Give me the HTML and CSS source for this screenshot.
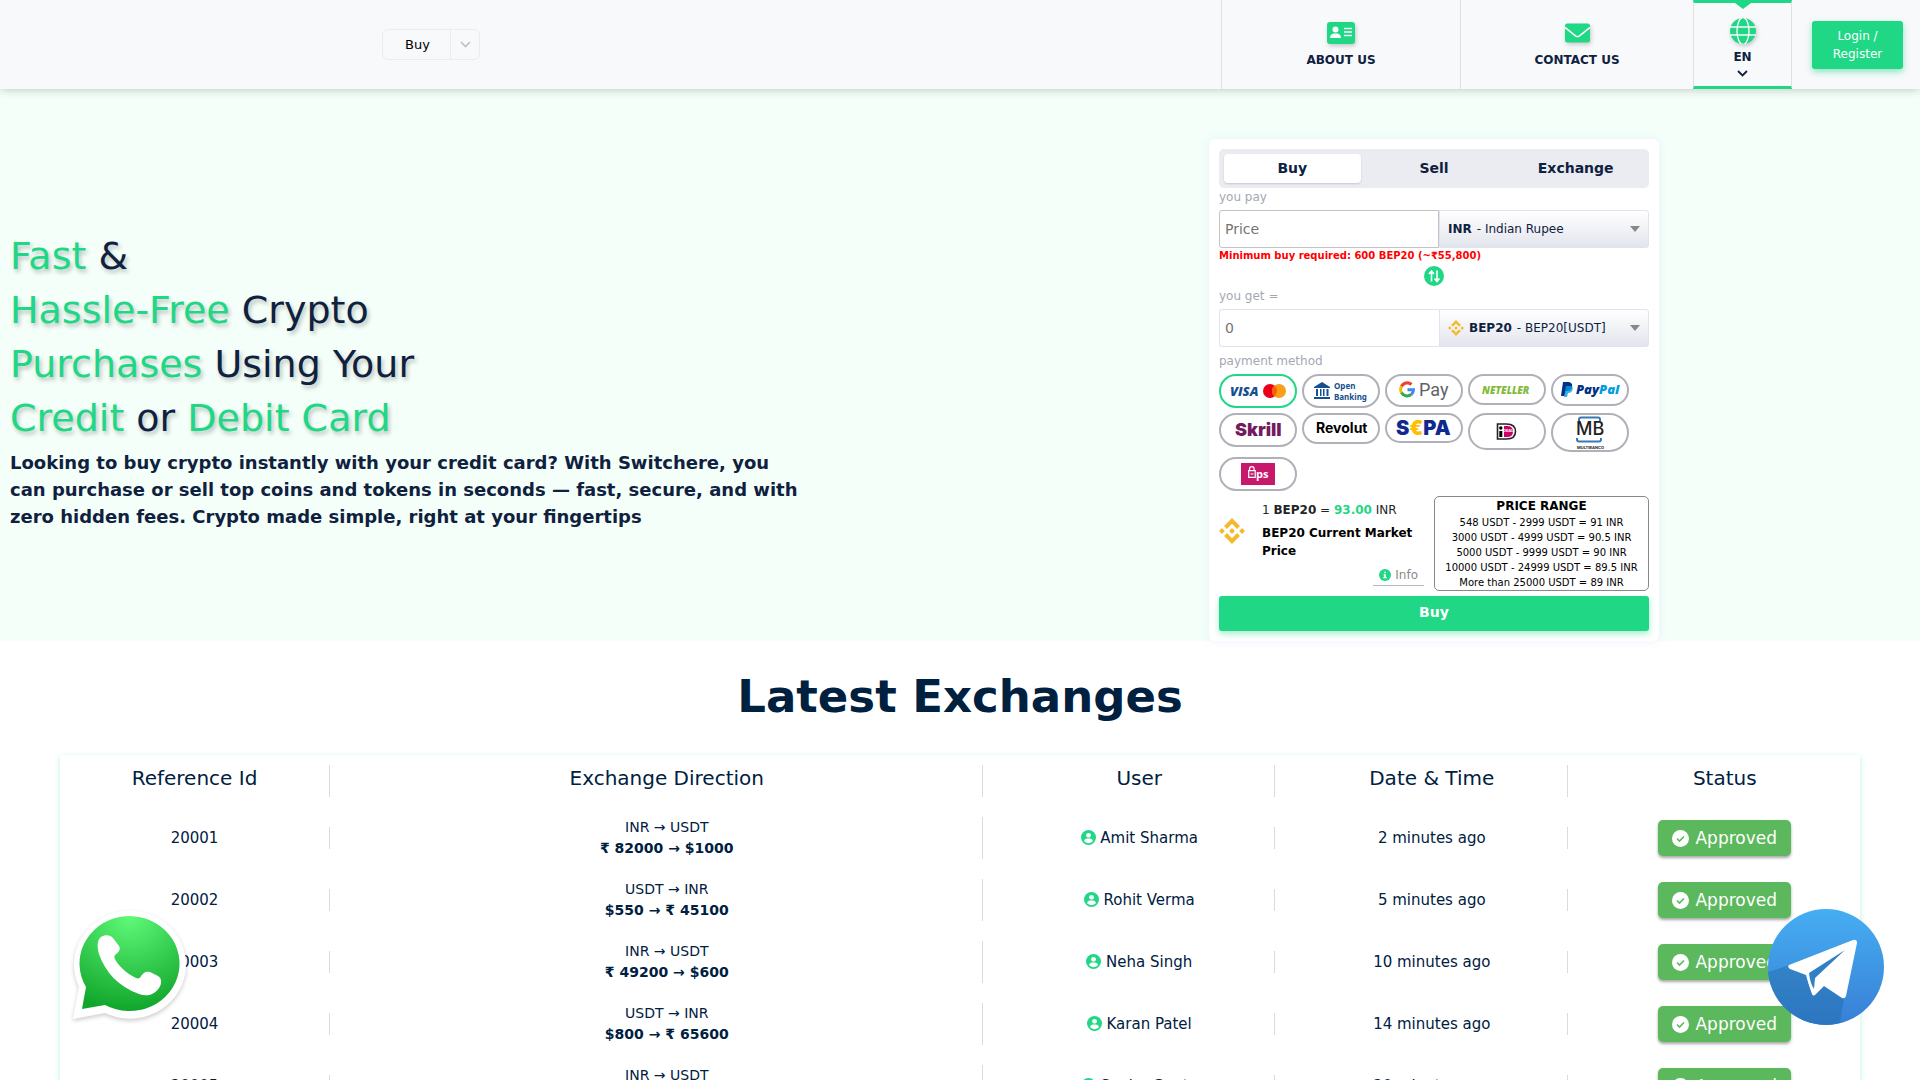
FILE: index.html
```html
<!DOCTYPE html>
<html lang="en">

<head>
    <meta charset="UTF-8">
    <meta name="viewport" content="width=device-width, initial-scale=1.0">
    <title>Buy crypto instantly</title>
    <link rel="stylesheet" href="styles.css">
</head>

<body>
    <!-- shared icons -->
    <svg class="sprite" aria-hidden="true">
        <symbol id="bnb" viewBox="0 0 32 32">
            <path fill="#f3ba2f" d="M9.8 13.4 16 7.2l6.2 6.2 3.6-3.6L16 0 6.2 9.8zM0 16l3.6-3.6L7.2 16l-3.6 3.6zM9.8 18.6 16 24.8l6.2-6.2 3.6 3.6L16 32l-9.8-9.8zM24.8 16l3.6-3.6L32 16l-3.6 3.6zM12.4 16 16 12.4l3.6 3.6-3.6 3.6z" />
        </symbol>
        <symbol id="user" viewBox="0 0 16 16">
            <circle cx="8" cy="8" r="8" fill="#1fd785" />
            <circle cx="8" cy="5.7" r="2.6" fill="#fff" />
            <path fill="#fff" d="M3.4 12c0-2 1.3-3 3-3h3.2c1.7 0 3 1 3 3-1 1.2-2.8 2-4.600 2s-3.600-.8-4.600-2z" />
        </symbol>
        <symbol id="check" viewBox="0 0 17 17">
            <circle cx="8.500" cy="8.500" r="8.500" fill="#fff" />
            <path d="M5 8.500l2.500 2.500 4.500-4.500" fill="none" stroke="#5cb85c" stroke-width="1.600" />
        </symbol>
    </svg>

    <header class="header">
        <div class="switcher">
            <button class="switcher-main">Buy</button>
            <button class="switcher-arrow" aria-label="Open menu">
                <svg width="11" height="7" viewBox="0 0 11 7"><path d="M1 1l4.500 4.500L10 1" fill="none" stroke="#bfbfbf" stroke-width="1.600" /></svg>
            </button>
        </div>

        <nav class="nav">
            <a href="#about" class="nav-item nav-about">
                <svg class="nav-icon" width="28" height="24" viewBox="0 0 28 24">
                    <rect y="1" width="28" height="22" rx="3" fill="#1fd785" />
                    <circle cx="8.500" cy="8.500" r="3" fill="#f8f9fb" />
                    <path fill="#f8f9fb" d="M3 17c0-3 2-4.500 4-4.500h3c2 0 4 1.500 4 4.500z" />
                    <path stroke="#f8f9fb" stroke-width="1.600" d="M17 7.500h8M17 11h8M17 14.500h8" />
                </svg>
                <span>ABOUT US</span>
            </a>
            <a href="#contact" class="nav-item nav-contact">
                <svg class="nav-icon" width="25" height="24" viewBox="0 0 25 24">
                    <rect y="2.500" width="25" height="19" rx="2.500" fill="#1fd785" />
                    <path d="M0 6.500l10.500 8.300q2 1.500 4 0L25 6.500" fill="none" stroke="#f8f9fb" stroke-width="1.600" />
                </svg>
                <span>CONTACT US</span>
            </a>
            <button class="nav-item nav-lang">
                <svg class="nav-icon" width="26" height="26" viewBox="0 0 26 26">
                    <circle cx="13" cy="13" r="13" fill="#1fd785" />
                    <ellipse cx="13" cy="13" rx="6" ry="13.500" fill="none" stroke="#f8f9fb" stroke-width="1.400" />
                    <path d="M0 9h26M0 17h26" stroke="#f8f9fb" stroke-width="1.400" />
                </svg>
                <span>EN</span>
                <svg width="11" height="7" viewBox="0 0 11 7"><path d="M1 1l4.500 4.500L10 1" fill="none" stroke="#0f213f" stroke-width="1.800" /></svg>
            </button>
        </nav>

        <a href="#login" class="login">Login / Register</a>
    </header>

    <section class="hero">
        <div class="hero-text">
            <h1>
                <span>Fast</span> &amp;<br>
                <span>Hassle-Free</span> Crypto<br>
                <span>Purchases</span> Using Your<br>
                <span>Credit</span> or <span>Debit Card</span>
            </h1>
            <p>Looking to buy crypto instantly with your credit card? With Switchere, you can purchase or sell top coins and tokens in seconds — fast, secure, and with zero hidden fees. Crypto made simple, right at your fingertips</p>
        </div>

        <form class="card">
            <div class="tabs">
                <button type="button" class="tab active">Buy</button>
                <button type="button" class="tab">Sell</button>
                <button type="button" class="tab">Exchange</button>
            </div>

            <label class="label" for="pay">you pay</label>
            <div class="field field-pay">
                <input id="pay" type="text" placeholder="Price">
                <button type="button" class="currency">
                    <b>INR</b><span>- Indian Rupee</span><i class="caret"></i>
                </button>
            </div>
            <p class="error">Minimum buy required: 600 BEP20 (~₹55,800)</p>

            <button type="button" class="swap" aria-label="Swap currencies">
                <svg width="20" height="20" viewBox="0 0 20 20">
                    <circle cx="10" cy="10" r="10" fill="#1fd785" />
                    <path d="M7.500 15.500v-10M5 8l2.500-3L10 8M13 4.500v10M10.500 12.500l2.500 3 2.500-3" fill="none" stroke="#fff" stroke-width="1.600" />
                </svg>
            </button>

            <label class="label" for="get">you get =</label>
            <div class="field">
                <input id="get" type="text" placeholder="0">
                <button type="button" class="currency">
                    <svg class="coin" width="16" height="16"><use href="#bnb" /></svg>
                    <b>BEP20</b><span>- BEP20[USDT]</span><i class="caret"></i>
                </button>
            </div>

            <p class="label label-methods">payment method</p>
            <div class="methods">
                <button type="button" class="method active" aria-label="Visa and Mastercard">
                    <svg width="60" height="30" viewBox="0 0 60 30">
                        <text x="2" y="20" class="logo-visa">VISA</text>
                        <circle cx="42" cy="15" r="7" fill="#eb001b" />
                        <circle cx="51" cy="15" r="7" fill="#f79e1b" />
                        <path d="M46.500 9.600a7 7 0 0 1 0 10.800 7 7 0 0 1 0-10.800z" fill="#ff5f00" />
                    </svg>
                </button>
                <button type="button" class="method" aria-label="Open Banking">
                    <svg width="60" height="30" viewBox="0 0 60 30">
                        <g fill="#14508f">
                            <path d="M3 11l8-5 8 5v1H3zM3 21h16v2H3zM5 13h2v7H5zM9 13h1.500v7H9zM12 13h1.500v7H12zM15.500 13h2v7h-2z" />
                            <text x="23" y="13" class="logo-open">Open</text>
                            <text x="23" y="24" class="logo-open">Banking</text>
                        </g>
                    </svg>
                </button>
                <button type="button" class="method" aria-label="Google Pay">
                    <svg width="60" height="29" viewBox="0 0 60 29">
                        <g fill="none" stroke-width="3" transform="translate(5 0)">
                            <path d="M12.500 8.500A6.500 6.500 0 0 0 2.400 10.500" stroke="#ea4335" />
                            <path d="M2.400 10.500a6.500 6.500 0 0 0 0 6" stroke="#fbbc04" />
                            <path d="M2.400 16.500a6.500 6.500 0 0 0 9.800 2" stroke="#34a853" />
                            <path d="M12.200 18.500a6.500 6.500 0 0 0 2.300-4.700H8.500" stroke="#4285f4" />
                        </g>
                        <text x="25" y="20" class="logo-gpay">Pay</text>
                    </svg>
                </button>
                <button type="button" class="method" aria-label="Neteller">
                    <svg width="60" height="27" viewBox="0 0 60 27">
                        <text x="5" y="18" class="logo-neteller">NETELLER</text>
                    </svg>
                </button>
                <button type="button" class="method" aria-label="PayPal">
                    <svg width="60" height="28" viewBox="0 0 60 28">
                        <path d="M3 6h6q4 1 3 5-1 4-5 4H5.500l-1 5H1z" fill="#003087" />
                        <path d="M6 10h5q3 1 1 5-1 2-4 2l-1 4H4z" fill="#009cde" opacity=".8" />
                        <text x="16" y="18" class="logo-paypal">Pay<tspan fill="#009cde">Pal</tspan></text>
                    </svg>
                </button>
                <button type="button" class="method" aria-label="Skrill">
                    <svg width="60" height="30" viewBox="0 0 60 30"><text x="7" y="21" class="logo-skrill">Skrill</text></svg>
                </button>
                <button type="button" class="method" aria-label="Revolut">
                    <svg width="60" height="27" viewBox="0 0 60 27"><text x="5" y="18" class="logo-revolut">Revolut</text></svg>
                </button>
                <button type="button" class="method" aria-label="SEPA">
                    <svg width="60" height="26" viewBox="0 0 60 26"><text x="2" y="20" class="logo-sepa">S<tspan fill="#ffbe00">€</tspan>PA</text></svg>
                </button>
                <button type="button" class="method" aria-label="iDEAL">
                    <svg width="60" height="33" viewBox="0 0 60 33">
                        <path d="M20.500 9h9q9 0 9 7.500t-9 7.500h-9z" fill="#fff" stroke="#222" stroke-width="1.600" />
                        <path d="M27 11h3q6 0 6 5.500t-6 5.500h-3z" fill="#cc0066" />
                        <circle cx="23.800" cy="13" r="1.700" />
                        <path d="M22.300 16h3v6h-3z" />
                        <text x="26" y="17" class="logo-ideal">DEAL</text>
                    </svg>
                </button>
                <button type="button" class="method" aria-label="Multibanco">
                    <svg width="60" height="35" viewBox="0 0 60 35">
                        <path d="M19 6V4.500q0-2 2-2h17q2 0 2 2V6M17 23v1.500q0 2 2 2h20q2 0 2-2V23" fill="none" stroke="#3b78b8" stroke-width="2" />
                        <text x="16" y="20" class="logo-mb">MB</text>
                        <text x="17" y="34" class="logo-multi">MULTIBANCO</text>
                    </svg>
                </button>
                <button type="button" class="method" aria-label="EPS">
                    <svg width="60" height="30" viewBox="0 0 60 30">
                        <path d="M13 4h34v22H13z" fill="#c8186c" />
                        <path d="M21.500 11.500V10a2.300 2.300 0 0 1 4.600 0v1.500M20.700 11.700h6.500v6.600h-6.500zM22.500 15h3" fill="none" stroke="#fff" stroke-width="1.200" />
                        <text x="28" y="19" class="logo-eps">ps</text>
                    </svg>
                </button>
            </div>

            <div class="summary">
                <svg class="coin" width="26" height="26"><use href="#bnb" /></svg>
                <div class="rate">
                    <p>1 <b>BEP20</b> = <b class="green">93.00</b> INR</p>
                    <h4>BEP20 Current Market Price</h4>
                    <button type="button" class="info">
                        <svg width="12" height="12" viewBox="0 0 12 12">
                            <circle cx="6" cy="6" r="6" fill="#1fd785" />
                            <path d="M5.200 2.800h1.600v1.500H5.200zM4.500 5.200h2.300v2.900h.9v1.100H4.300V8.100h.9V6.300h-.7z" fill="#fff" />
                        </svg>
                        Info
                    </button>
                </div>
                <div class="range">
                    <h5>PRICE RANGE</h5>
                    <p>548 USDT - 2999 USDT = 91 INR</p>
                    <p>3000 USDT - 4999 USDT = 90.5 INR</p>
                    <p>5000 USDT - 9999 USDT = 90 INR</p>
                    <p>10000 USDT - 24999 USDT = 89.5 INR</p>
                    <p>More than 25000 USDT = 89 INR</p>
                </div>
            </div>

            <button type="submit" class="submit">Buy</button>
        </form>
    </section>

    <section class="latest">
        <h2>Latest Exchanges</h2>
        <table>
            <thead>
                <tr>
                    <th class="col-id"><div>Reference Id</div></th>
                    <th><div>Exchange Direction</div></th>
                    <th class="col-small"><div>User</div></th>
                    <th class="col-small"><div>Date &amp; Time</div></th>
                    <th class="col-small"><div>Status</div></th>
                </tr>
            </thead>
            <tbody>
                <tr>
                    <td><div>20001</div></td>
                    <td><div class="direction">INR → USDT<br><b>₹ 82000 → $1000</b></div></td>
                    <td><div><svg class="user" width="15" height="15"><use href="#user" /></svg> Amit Sharma</div></td>
                    <td><div>2 minutes ago</div></td>
                    <td><div><span class="approved"><svg width="17" height="17"><use href="#check" /></svg>Approved</span></div></td>
                </tr>
                <tr>
                    <td><div>20002</div></td>
                    <td><div class="direction">USDT → INR<br><b>$550 → ₹ 45100</b></div></td>
                    <td><div><svg class="user" width="15" height="15"><use href="#user" /></svg> Rohit Verma</div></td>
                    <td><div>5 minutes ago</div></td>
                    <td><div><span class="approved"><svg width="17" height="17"><use href="#check" /></svg>Approved</span></div></td>
                </tr>
                <tr>
                    <td><div>20003</div></td>
                    <td><div class="direction">INR → USDT<br><b>₹ 49200 → $600</b></div></td>
                    <td><div><svg class="user" width="15" height="15"><use href="#user" /></svg> Neha Singh</div></td>
                    <td><div>10 minutes ago</div></td>
                    <td><div><span class="approved"><svg width="17" height="17"><use href="#check" /></svg>Approved</span></div></td>
                </tr>
                <tr>
                    <td><div>20004</div></td>
                    <td><div class="direction">USDT → INR<br><b>$800 → ₹ 65600</b></div></td>
                    <td><div><svg class="user" width="15" height="15"><use href="#user" /></svg> Karan Patel</div></td>
                    <td><div>14 minutes ago</div></td>
                    <td><div><span class="approved"><svg width="17" height="17"><use href="#check" /></svg>Approved</span></div></td>
                </tr>
                <tr>
                    <td><div>20005</div></td>
                    <td><div class="direction">INR → USDT<br><b>₹ 98400 → $1200</b></div></td>
                    <td><div><svg class="user" width="15" height="15"><use href="#user" /></svg> Sneha Gupta</div></td>
                    <td><div>20 minutes ago</div></td>
                    <td><div><span class="approved"><svg width="17" height="17"><use href="#check" /></svg>Approved</span></div></td>
                </tr>
            </tbody>
        </table>
    </section>

    <a href="#whatsapp" class="chat chat-left" aria-label="WhatsApp">
        <svg width="120" height="120" viewBox="0 0 120 120">
            <defs>
                <radialGradient id="wa" cx=".5" cy="0" r="1">
                    <stop offset="0" stop-color="#60fa7a" />
                    <stop offset="1" stop-color="#10a62b" />
                </radialGradient>
            </defs>
            <path class="wa-back" fill="#fff" d="M4 113l6-32A56 54 0 1 1 36 107z" />
            <path fill="url(#wa)" d="M13 103l4-22A50 47.500 0 1 1 36 99z" />
            <path fill="#fff" d="M32 31c4-3 10-2 12 1l6 8c2 3 0 6-4 9-1 2-1 3 1 6 6 9 14 14 20 17 3 1 4 0 5-2 3-4 5-5 9-4l8 4c4 2 4 8 1 12-5 7-12 9-20 6C50 81 36 66 30 48c-2-7-2-14 2-17z" />
        </svg>
    </a>
    <a href="#telegram" class="chat chat-right" aria-label="Telegram">
        <svg width="116" height="116" viewBox="0 0 116 116">
            <defs>
                <linearGradient id="tg" x1="0" y1="0" x2="0" y2="1">
                    <stop offset="0" stop-color="#46aef2" />
                    <stop offset="1" stop-color="#387fd6" />
                </linearGradient>
                <linearGradient id="tg-shade" x1="0" y1="0" x2="0" y2="1">
                    <stop offset="0" stop-color="#3585c9" />
                    <stop offset="1" stop-color="#2c76c0" />
                </linearGradient>
            </defs>
            <circle cx="58" cy="58" r="58" fill="url(#tg)" />
            <path fill="url(#tg-shade)" d="M0 63l22-7 60-15-6 48-4 25A58 58 0 0 1 0 63z" />
            <path fill="#fff" d="M21 56q-2 2 1 4l16 6q2 8 6 19 1 3 4 0l8-8 18 12q3 1 4-2L89 34q0-4-4-3z" />
            <path fill="#3080c6" d="M41 64l36-23-30 28-1 11q-4-6-5-16z" />
        </svg>
    </a>
</body>

</html>
```
FILE: styles.css
```css
* {
    box-sizing: border-box;
}

body {
    font-family: "DejaVu Sans", sans-serif;
    margin: 0;
    color: #0f213f;
    background: #fff;
}

h1, h2, h4, h5, p {
    margin: 0;
}

button, input {
    font-family: inherit;
    color: inherit;
}

button {
    border: 0;
    padding: 0;
    background: none;
    cursor: pointer;
}

svg {
    flex-shrink: 0;
}

.sprite {
    display: none;
}

.header {
    display: flex;
    align-items: center;
    height: 89px;
    padding: 0 17px 0 382px;
    background: #f8f9fb;
    box-shadow: 0 0 10px rgba(0, 0, 0, 0.25);
    position: relative;
    z-index: 1;
}

.switcher {
    display: flex;
    height: 31px;
    border: 1px solid #ececee;
    border-radius: 6px;
    color: #000;
}

.switcher-main {
    width: 68px;
    padding-left: 2px;
    font-size: 13px;
    border-right: 1px solid #ececee;
}

.switcher-arrow {
    width: 28px;
    display: flex;
    align-items: center;
    justify-content: center;
}

.nav {
    display: flex;
    align-self: stretch;
    margin-left: auto;
    margin-right: 20px;
}

.nav-item {
    display: flex;
    flex-direction: column;
    align-items: center;
    justify-content: center;
    gap: 7px;
    border-left: 1px solid #dfe0e0;
    color: #0f213f;
    font-size: 12px;
    font-weight: bold;
    line-height: 16px;
    text-decoration: none;
}

.nav-icon {
    filter: drop-shadow(1px 2px 2px rgba(0, 0, 0, 0.2));
}

.nav-about {
    width: 239px;
}

.nav-contact {
    width: 233px;
}

.nav-lang {
    position: relative;
    width: 99px;
    gap: 5px;
    padding-top: 6px;
    border-right: 1px solid #dfe0e0;
    border-top: 3px solid #1fd785;
    border-bottom: 3px solid #1fd785;
}

.nav-lang::before {
    content: "";
    position: absolute;
    top: 0;
    border: 8px solid transparent;
    border-top: 6px solid #1fd785;
    border-bottom: 0;
}

.login {
    width: 91px;
    padding: 6px 16px;
    border-radius: 3px;
    background: #1fd785;
    box-shadow: 0 3px 6px rgba(31, 215, 133, 0.5);
    color: #fff;
    font-size: 12px;
    line-height: 18px;
    text-align: center;
    text-decoration: none;
}

.hero {
    display: flex;
    justify-content: space-between;
    padding-top: 50px;
    background: #f4fff9;
}

.hero-text {
    width: 820px;
    padding: 90px 10px 0;
}

.hero-text h1 {
    margin-bottom: 4px;
    font-size: 38px;
    font-weight: normal;
    line-height: 54px;
    text-shadow: 2px 3px 4px rgba(0, 0, 0, 0.25);
}

.hero-text h1 span,
.green {
    color: #1fd785;
}

.hero-text p {
    font-size: 18px;
    font-weight: bold;
    line-height: 27px;
}

.card {
    width: 450px;
    margin-right: 261px;
    padding: 10px;
    border-radius: 6px;
    background: #fff;
    box-shadow: 0 0 10px rgba(100, 130, 255, 0.1);
}

.tabs {
    display: flex;
    gap: 5px;
    padding: 5px;
    border-radius: 5px;
    background: #ebecf2;
}

.tab {
    flex: 1 1 0;
    height: 29px;
    padding-bottom: 2px;
    border-radius: 4px;
    font-size: 14px;
    font-weight: bold;

    &.active {
        background: #fff;
        box-shadow: 0 1px 2px rgba(0, 0, 0, 0.15);
    }
}

.label {
    display: block;
    padding-bottom: 4px;
    color: #a3a8b3;
    font-size: 12px;
    line-height: 18px;
}

.field {
    display: flex;
    height: 38px;

    input {
        width: 220px;
        padding: 0 5px;
        border: 1px solid #e0e2f0;
        border-right: 0;
        border-radius: 3px 0 0 3px;
        background: #fff;
        font-size: 14px;
    }

    input::placeholder {
        color: #757575;
    }
}

.field-pay input {
    border: 1px solid #c4c4c4;
}

.currency {
    display: flex;
    flex: 1;
    align-items: center;
    padding: 0 8px;
    border: 1px solid #e0e2f0;
    border-radius: 0 3px 3px 0;
    background: linear-gradient(#fff, #e3e5ed);
    font-size: 12px;

    .coin {
        margin-right: 5px;
    }

    span {
        margin-left: 5px;
    }
}

.caret {
    margin-left: auto;
    border: 5px solid transparent;
    border-top: 6px solid #888;
    border-bottom: 0;
}

.error {
    color: #f00;
    font-size: 10px;
    font-weight: bold;
    line-height: 16px;
}

.swap {
    display: block;
    height: 20px;
    margin: 2px auto 1px;
}

.label-methods {
    padding-top: 5px;
}

.methods {
    display: flex;
    flex-wrap: wrap;
    align-items: flex-start;
    gap: 5px;
    padding-bottom: 5px;
}

.method {
    display: flex;
    justify-content: center;
    width: 78px;
    border: 2px solid #b0b0b8;
    border-radius: 20px;
    background: #fff;

    &.active {
        border-color: #1fd785;
    }
}

.logo-visa {
    font: italic 800 13px "Open Sans", sans-serif;
    fill: #14508f;
}

.logo-open {
    font: bold 8px "Noto Sans", sans-serif;
}

.logo-gpay {
    font: 18px Roboto, sans-serif;
    fill: #5f6368;
}

.logo-neteller {
    font: italic 800 10px "Open Sans", sans-serif;
    fill: #83ba3b;
}

.logo-paypal {
    font: italic 800 13px "Open Sans", sans-serif;
    fill: #003087;
}

.logo-skrill {
    font: 900 18px Inter, sans-serif;
    fill: #721c5f;
}

.logo-revolut {
    font: bold 14px Inter, sans-serif;
    fill: #000;
}

.logo-sepa {
    font: 900 20px Inter, sans-serif;
    fill: #10298e;
}

.logo-ideal {
    font: bold 4px Inter, sans-serif;
    fill: #fff;
}

.logo-mb {
    font: 500 18px Inter, sans-serif;
    fill: #222;
}

.logo-multi {
    font: bold 4px Inter, sans-serif;
    fill: #222;
}

.logo-eps {
    font: bold 11px "Open Sans", sans-serif;
    fill: #fff;
}

.summary {
    display: flex;

    .coin {
        margin-top: 22px;
    }
}

.rate {
    flex: 1;
    padding: 5px 10px 0 17px;
    color: #212529;
    font-size: 12px;
    line-height: 18px;

    h4 {
        margin-top: 5px;
        color: #000;
        font-size: 12px;
    }
}

.info {
    display: flex;
    align-items: center;
    gap: 4px;
    height: 21px;
    margin: 5px 0 0 auto;
    padding: 0 6px;
    border-bottom: 1px solid #bbb;
    color: #8a8a8a;
    font-size: 12px;
}

.range {
    width: 215px;
    height: 95px;
    border: 1px solid #888;
    border-radius: 5px;
    color: #000;
    font-size: 10px;
    line-height: 15px;
    text-align: center;

    h5 {
        font-size: 12px;
        line-height: 18px;
    }
}

.submit {
    width: 100%;
    height: 35px;
    margin-top: 5px;
    padding-bottom: 3px;
    border-radius: 3px;
    background: #1fd785;
    box-shadow: 0 3px 6px rgba(31, 215, 133, 0.4);
    color: #fff;
    font-size: 14px;
    font-weight: bold;
}

.latest {
    padding: 20px 60px 0;
    color: #00203f;

    h2 {
        margin-bottom: 22px;
        font-size: 45px;
        line-height: 72px;
        text-align: center;
    }

    table {
        width: 100%;
        table-layout: fixed;
        border-collapse: collapse;
        box-shadow: 0 2px 6px rgba(31, 215, 133, 0.3);
        text-align: center;
    }

    th,
    td {
        height: 62px;
        padding: 0 0 0 22px;
        font-size: 15px;
        line-height: 22px;
    }

    th {
        height: 52px;
        font-size: 20px;
        font-weight: normal;
        line-height: 26px;
    }

    th:first-child,
    td:first-child {
        padding-left: 0;
    }

    th div,
    td div {
        border-right: 1px solid #d8dcdf;
    }

    th div {
        padding-bottom: 6px;
    }

    th:last-child div,
    td:last-child div {
        border: 0;
    }

    .direction {
        font-size: 14px;
        line-height: 21px;
    }

    .col-id {
        width: 15%;
    }

    .col-small {
        width: 16.25%;
    }
}

.user {
    vertical-align: -2px;
}

.approved {
    display: inline-flex;
    align-items: center;
    gap: 6px;
    height: 36px;
    padding: 0 14px;
    border-radius: 5px;
    background: #5cb85c;
    box-shadow: 0 2px 3px rgba(0, 0, 0, 0.35);
    color: #fff;
    font-size: 17px;
    vertical-align: middle;
}

.chat {
    position: fixed;
    bottom: 55px;

    svg {
        display: block;
    }
}

.chat-left {
    left: 69px;
    bottom: 54px;
}

.chat-right {
    right: 36px;
}

.wa-back {
    filter: drop-shadow(0 2px 2px rgba(0, 0, 0, 0.2));
}
```
